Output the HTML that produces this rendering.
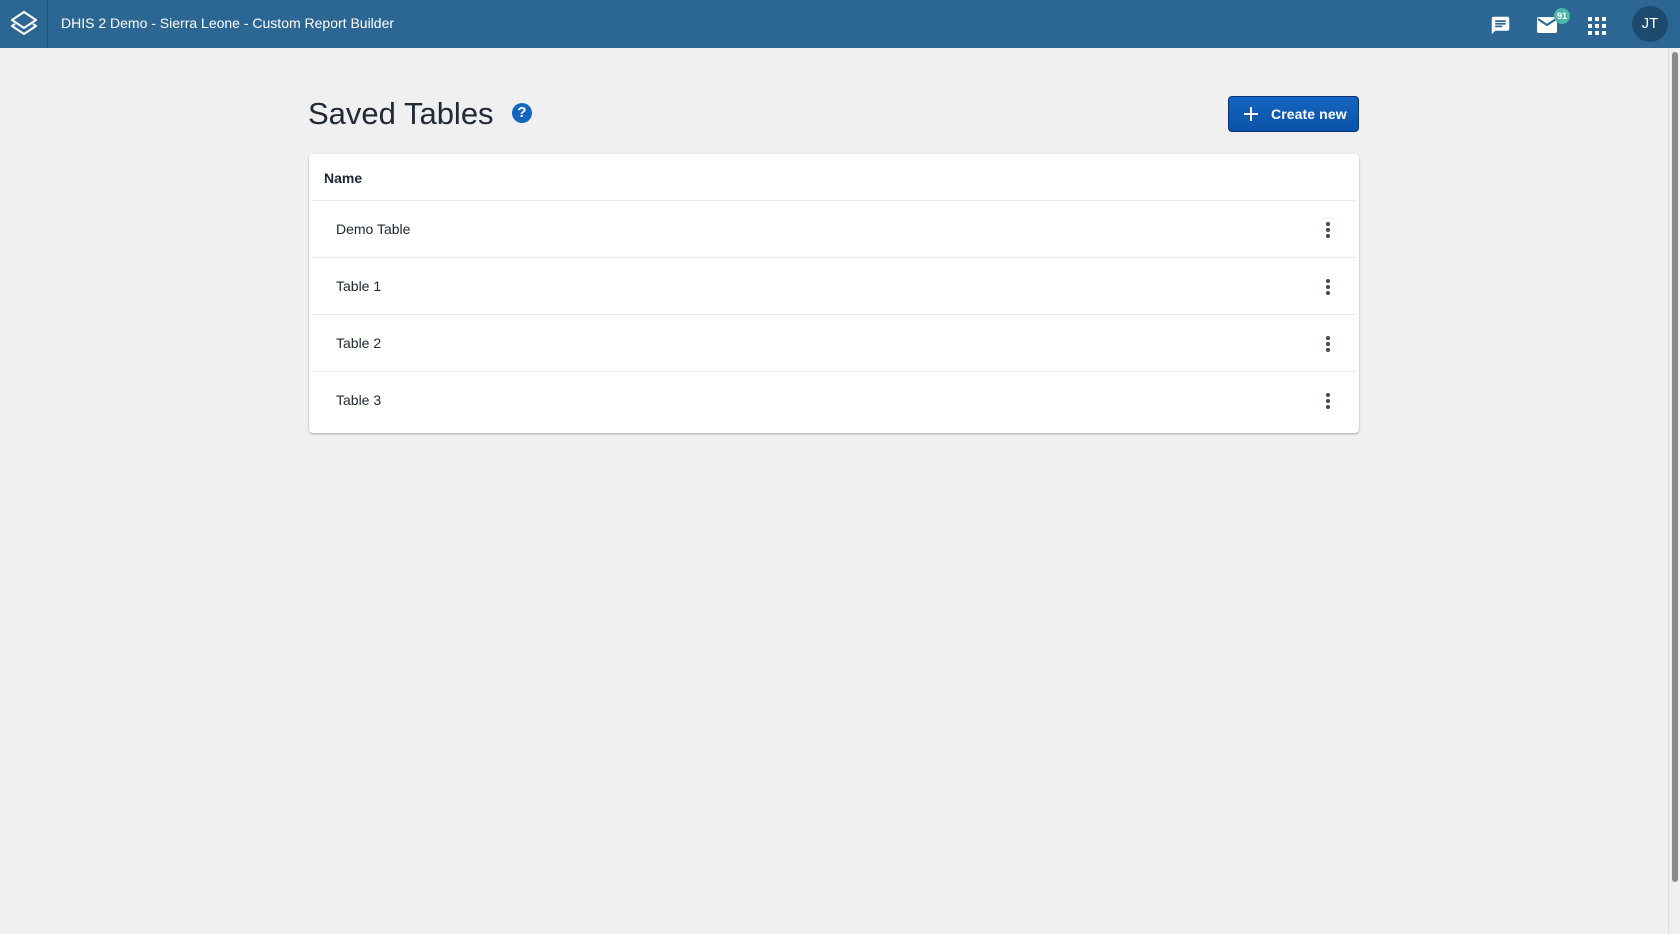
<!DOCTYPE html>
<html><head><meta charset="utf-8"><style>
*{box-sizing:border-box;margin:0;padding:0}
body{width:1680px;height:934px;overflow:hidden;background:#f0f0f0;font-family:"Liberation Sans",Roboto,sans-serif;position:relative;color:#212934}
.hdr{position:absolute;left:0;top:0;width:1680px;height:48px;background:#2c6693;}
.logo{position:absolute;left:0;top:0;width:48px;height:48px;border-right:1px solid #245579}
.ttl{position:absolute;left:61px;top:15px;color:#fff;font-size:14px;font-weight:500}
.sb{position:absolute;right:0;top:48px;width:12px;height:886px;background:#f0f0f0;border-left:1px solid #ddd}
.sb div{position:absolute;left:3px;top:4px;width:6px;height:830px;background:#8a8a8a;border-radius:3px}
h1{position:absolute;left:308px;top:96px;font-weight:300;font-size:31px;color:#212934}
.help{position:absolute;left:512px;top:103px;width:20px;height:20px;border-radius:50%;background:#1565c0;color:#fff;font-size:15px;font-weight:bold;text-align:center;line-height:20px}
.btn{position:absolute;left:1228px;top:96px;width:131px;height:36px;background:linear-gradient(#1565c0,#0a53a8);border:1px solid #093371;border-radius:4px;color:#fff;font-size:14px;font-weight:bold;line-height:34px;padding-left:42px;letter-spacing:.1px}
.btn svg{position:absolute;left:14px;top:9px}
.card{position:absolute;left:309px;top:154px;width:1050px;height:279px;background:#fff;border-radius:4px;box-shadow:0 1px 2px rgba(0,0,0,.3)}
.th{height:47px;padding:16px 12px;font-weight:bold;font-size:14px;border-bottom:1px solid #e8edf2;margin:0 3px}
.row{height:57px;border-bottom:1px solid #e8edf2;margin:0 3px;position:relative;font-size:14px;padding:20px 24px}
.row:last-child{border-bottom:none}
.k{position:absolute;left:1014px;top:21px;width:5px}
.k i{display:block;width:4px;height:4px;border-radius:50%;background:#404b5a;margin-bottom:2px}
</style></head><body>
<div class="hdr">
<div class="logo"><svg width="48" height="48" viewBox="0 0 48 48" fill="none" stroke="#fff" stroke-width="2.2" stroke-linejoin="round"><path d="M24 12 L36 20 L24 28 L12 20 Z"/><path d="M15 24 L12 26 L24 34 L36 26 L33 24"/></svg></div>
<div class="ttl">DHIS 2 Demo - Sierra Leone - Custom Report Builder</div>
<svg style="position:absolute;left:1490px;top:15px" width="21" height="21" viewBox="0 0 24 24"><path fill="#fff" d="M20 2H4c-1.1 0-2 .9-2 2v18l4-4h14c1.1 0 2-.9 2-2V4c0-1.1-.9-2-2-2zM6 9h12v2H6zm8 5H6v-2h8zm4-6H6V6h12z"/></svg>
<svg style="position:absolute;left:1536px;top:15px" width="22" height="20" viewBox="0 0 22 20"><rect x="1" y="2" width="20" height="16" rx="2" fill="#fff"/><path d="M2 4 L11 10 L20 4" stroke="#2c6693" stroke-width="2" fill="none"/></svg>
<div style="position:absolute;left:1554px;top:8px;width:16px;height:16px;border-radius:50%;background:#4db6ac;color:#fff;font-size:9px;font-weight:bold;text-align:center;line-height:16px">91</div>
<svg style="position:absolute;left:1588px;top:17px" width="18" height="18" viewBox="0 0 18 18" fill="#fff"><rect x="0" y="0" width="4" height="4"/><rect x="7" y="0" width="4" height="4"/><rect x="14" y="0" width="4" height="4"/><rect x="0" y="7" width="4" height="4"/><rect x="7" y="7" width="4" height="4"/><rect x="14" y="7" width="4" height="4"/><rect x="0" y="14" width="4" height="4"/><rect x="7" y="14" width="4" height="4"/><rect x="14" y="14" width="4" height="4"/></svg>
<div style="position:absolute;left:1632px;top:6px;width:36px;height:36px;border-radius:50%;background:#1d4a6e;color:#fff;font-size:15px;text-align:center;line-height:36px">JT</div>
</div>
<div class="sb"><div></div></div>
<h1>Saved Tables</h1>
<div class="help">?</div>
<div class="btn"><svg width="16" height="16" viewBox="0 0 16 16"><path d="M8 1v14M1 8h14" stroke="#fff" stroke-width="2"/></svg>Create new</div>
<div class="card">
<div class="th">Name</div>
<div class="row">Demo Table<div class="k"><i></i><i></i><i></i></div></div>
<div class="row">Table 1<div class="k"><i></i><i></i><i></i></div></div>
<div class="row">Table 2<div class="k"><i></i><i></i><i></i></div></div>
<div class="row">Table 3<div class="k"><i></i><i></i><i></i></div></div>
</div>
</body></html>
